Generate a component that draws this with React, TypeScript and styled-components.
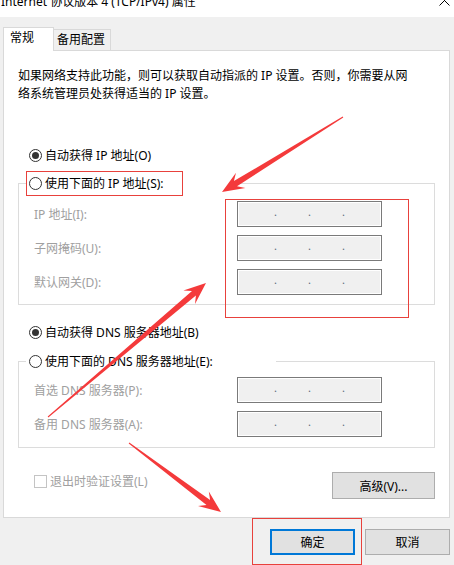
import React from "react";
import styled, { createGlobalStyle } from "styled-components";

const Global = createGlobalStyle`
  html, body { margin: 0; padding: 0; background: #f0f0f0; }
  body {
    font-family: "Noto Sans", "Noto Sans CJK SC", sans-serif;
    font-size: 12px;
    color: #000;
  }
  * { box-sizing: border-box; }
`;

const Window = styled.div`
  position: relative;
  width: 454px;
  height: 565px;
  overflow: hidden;
  background: #f0f0f0;
  display: flex;
  flex-direction: column;
`;

const TitleBar = styled.div`
  flex: none;
  height: 17px;
  background: #fff;
  display: flex;
  justify-content: space-between;
  align-items: flex-start;
  padding: 0 4px 0 1px;
  overflow: hidden;
`;

const Title = styled.div`
  font-size: 12px;
  line-height: 16px;
  margin-top: -6px;
  white-space: nowrap;
`;

const CloseIcon = styled.svg`
  flex: none;
  margin-top: -5px;
`;

const TabRow = styled.div`
  display: flex;
  align-items: flex-end;
  height: 23px;
  margin: 10px 0 0 3px;
  position: relative;
  z-index: 1;
`;

const Tab = styled.div<{ $active?: boolean; $w: number }>`
  width: ${(p) => p.$w}px;
  height: ${(p) => (p.$active ? 24 : 21)}px;
  margin-bottom: ${(p) => (p.$active ? -1 : 0)}px;
  background: ${(p) => (p.$active ? "#fff" : "#f0f0f0")};
  border: 1px solid #d9d9d9;
  border-bottom: none;
  border-left-width: ${(p) => (p.$active ? 1 : 0)}px;
  padding: ${(p) => (p.$active ? "0 0 3px 6px" : "0 0 1px 3px")};
  display: flex;
  align-items: center;
  line-height: 18px;
  white-space: nowrap;
`;

const Panel = styled.div`
  margin-left: 3px;
  width: 447px;
  height: 468px;
  background: #fff;
  border: 1px solid #d9d9d9;
  display: flex;
  flex-direction: column;
  padding-top: 16px;
`;

const Description = styled.p`
  margin: 0;
  padding: 0 14px;
  line-height: 18px;
  white-space: nowrap;
`;

const RadioRow = styled.label<{ $mt: number }>`
  display: flex;
  align-items: center;
  gap: 3px;
  height: 20px;
  margin-top: ${(p) => p.$mt}px;
  padding-left: 25px;
  white-space: nowrap;
`;

const RadioCircle = styled.span<{ $checked?: boolean }>`
  flex: none;
  width: 13px;
  height: 13px;
  border-radius: 50%;
  border: 1px solid #333;
  background: #fff;
  display: flex;
  align-items: center;
  justify-content: center;
  &::after {
    content: "";
    display: ${(p) => (p.$checked ? "block" : "none")};
    width: 7px;
    height: 7px;
    border-radius: 50%;
    background: #333;
  }
`;

const Group = styled.fieldset<{ $mt: number; $pt: number; $pb: number }>`
  margin: ${(p) => p.$mt}px 14px 0;
  padding: ${(p) => p.$pt}px 0 ${(p) => p.$pb}px 0;
  border: 1px solid #dcdcdc;
  min-width: 0;
`;

const Legend = styled.legend<{ $w: number }>`
  display: flex;
  align-items: center;
  gap: 3px;
  width: ${(p) => p.$w}px;
  height: 22px;
  padding: 0 0 0 3px;
  margin-left: 7px;
  white-space: nowrap;
`;

const FieldGrid = styled.div`
  display: grid;
  grid-template-columns: 203px 145px;
  row-gap: 8px;
  align-items: center;
  padding-left: 15px;
`;

const FieldLabel = styled.span`
  color: #a0a0a0;
  white-space: nowrap;
`;

const IpBox = styled.div`
  height: 26px;
  border: 1px solid #7a7a7a;
  box-shadow: inset 0 0 0 1px #fff;
  background: #f0f0f0;
  display: flex;
  align-items: center;
  justify-content: center;
  gap: 31px;
`;

const Dot = styled.span`
  width: 3px;
  text-align: center;
  font-size: 11px;
  line-height: 11px;
  color: #5a6a7a;
  transform: translateY(-3px);
`;

const BottomRow = styled.div`
  display: flex;
  justify-content: space-between;
  align-items: flex-start;
  margin: 24px 14px 0 30px;
`;

const CheckRow = styled.label`
  display: flex;
  align-items: center;
  gap: 3px;
  height: 18px;
  color: #a0a0a0;
  white-space: nowrap;
`;

const CheckBox = styled.span`
  flex: none;
  width: 13px;
  height: 13px;
  border: 1px solid #c4c4c4;
  background: #fff;
`;

const Button = styled.button<{ $w: number; $h: number; $primary?: boolean }>`
  width: ${(p) => p.$w}px;
  height: ${(p) => p.$h}px;
  padding: 0;
  background: #e1e1e1;
  border: ${(p) => (p.$primary ? "2px solid #0078d7" : "1px solid #adadad")};
  font-family: inherit;
  font-size: 12px;
  color: #000;
  white-space: nowrap;
`;

const Footer = styled.div`
  display: flex;
  justify-content: flex-end;
  gap: 10px;
  padding: 11px 4px 0 0;
`;

const Overlay = styled.div`
  position: absolute;
  inset: 0;
  pointer-events: none;
  z-index: 5;
`;

const RedBox = styled.div<{ $x: number; $y: number; $w: number; $h: number }>`
  position: absolute;
  left: ${(p) => p.$x}px;
  top: ${(p) => p.$y}px;
  width: ${(p) => p.$w}px;
  height: ${(p) => p.$h}px;
  border: 1px solid #e8413c;
`;

const ArrowLayer = styled.svg`
  position: absolute;
  left: 0;
  top: 0;
`;

function arrowPoints(
  tx: number,
  ty: number,
  px: number,
  py: number,
  headLen = 22,
  headHalf = 9,
  tailW = 1,
  shaftW = 6
): string {
  const dx = px - tx;
  const dy = py - ty;
  const len = Math.hypot(dx, dy);
  const ux = dx / len;
  const uy = dy / len;
  const nx = -uy;
  const ny = ux;
  const bx = px - ux * headLen;
  const by = py - uy * headLen;
  const jx = px - ux * headLen * 0.72;
  const jy = py - uy * headLen * 0.72;
  const pts: [number, number][] = [
    [tx + (nx * tailW) / 2, ty + (ny * tailW) / 2],
    [jx + (nx * shaftW) / 2, jy + (ny * shaftW) / 2],
    [bx + nx * headHalf, by + ny * headHalf],
    [px, py],
    [bx - nx * headHalf, by - ny * headHalf],
    [jx - (nx * shaftW) / 2, jy - (ny * shaftW) / 2],
    [tx - (nx * tailW) / 2, ty - (ny * tailW) / 2],
  ];
  return pts.map((p) => `${p[0].toFixed(1)},${p[1].toFixed(1)}`).join(" ");
}

const IpField: React.FC = () => (
  <IpBox>
    <Dot>.</Dot>
    <Dot>.</Dot>
    <Dot>.</Dot>
  </IpBox>
);

export default function App() {
  return (
    <>
      <Global />
      <Window>
        <TitleBar>
          <Title>Internet 协议版本 4 (TCP/IPv4) 属性</Title>
          <CloseIcon width="11" height="11" viewBox="0 0 11 11">
            <path d="M0.5 0.5 L10.5 10.5 M10.5 0.5 L0.5 10.5" stroke="#000" strokeWidth="1" />
          </CloseIcon>
        </TitleBar>

        <TabRow>
          <Tab $active $w={51}>常规</Tab>
          <Tab $w={57}>备用配置</Tab>
        </TabRow>

        <Panel>
          <Description>
            如果网络支持此功能，则可以获取自动指派的 IP 设置。否则，你需要从网
            <br />
            络系统管理员处获得适当的 IP 设置。
          </Description>

          <RadioRow $mt={42}>
            <RadioCircle $checked />
            自动获得 IP 地址(O)
          </RadioRow>

          <Group $mt={7} $pt={7} $pb={9}>
            <Legend $w={210}>
              <RadioCircle />
              使用下面的 IP 地址(S):
            </Legend>
            <FieldGrid>
              <FieldLabel>IP 地址(I):</FieldLabel>
              <IpField />
              <FieldLabel>子网掩码(U):</FieldLabel>
              <IpField />
              <FieldLabel>默认网关(D):</FieldLabel>
              <IpField />
            </FieldGrid>
          </Group>

          <RadioRow $mt={17}>
            <RadioCircle $checked />
            自动获得 DNS 服务器地址(B)
          </RadioRow>

          <Group $mt={8} $pt={5} $pb={10}>
            <Legend $w={250}>
              <RadioCircle />
              使用下面的 DNS 服务器地址(E):
            </Legend>
            <FieldGrid>
              <FieldLabel>首选 DNS 服务器(P):</FieldLabel>
              <IpField />
              <FieldLabel>备用 DNS 服务器(A):</FieldLabel>
              <IpField />
            </FieldGrid>
          </Group>

          <BottomRow>
            <CheckRow>
              <CheckBox />
              退出时验证设置(L)
            </CheckRow>
            <Button $w={103} $h={27}>高级(V)...</Button>
          </BottomRow>
        </Panel>

        <Footer>
          <Button $w={85} $h={26} $primary>确定</Button>
          <Button $w={85} $h={26}>取消</Button>
        </Footer>

        <Overlay>
          <RedBox $x={26} $y={171} $w={157} $h={25} />
          <RedBox $x={225} $y={199} $w={184} $h={119} />
          <RedBox $x={252} $y={518} $w={110} $h={47} />
          <ArrowLayer width="454" height="565" viewBox="0 0 454 565">
            <polygon points={arrowPoints(343, 117, 222, 192, 22, 9, 1, 6)} fill="#f43a3b" />
            <polygon points={arrowPoints(48, 417, 206, 283, 22, 9, 1, 6)} fill="#f43a3b" />
            <polygon points={arrowPoints(129, 443, 221, 512, 22, 9, 1, 6)} fill="#f43a3b" />
          </ArrowLayer>
        </Overlay>
      </Window>
    </>
  );
}
